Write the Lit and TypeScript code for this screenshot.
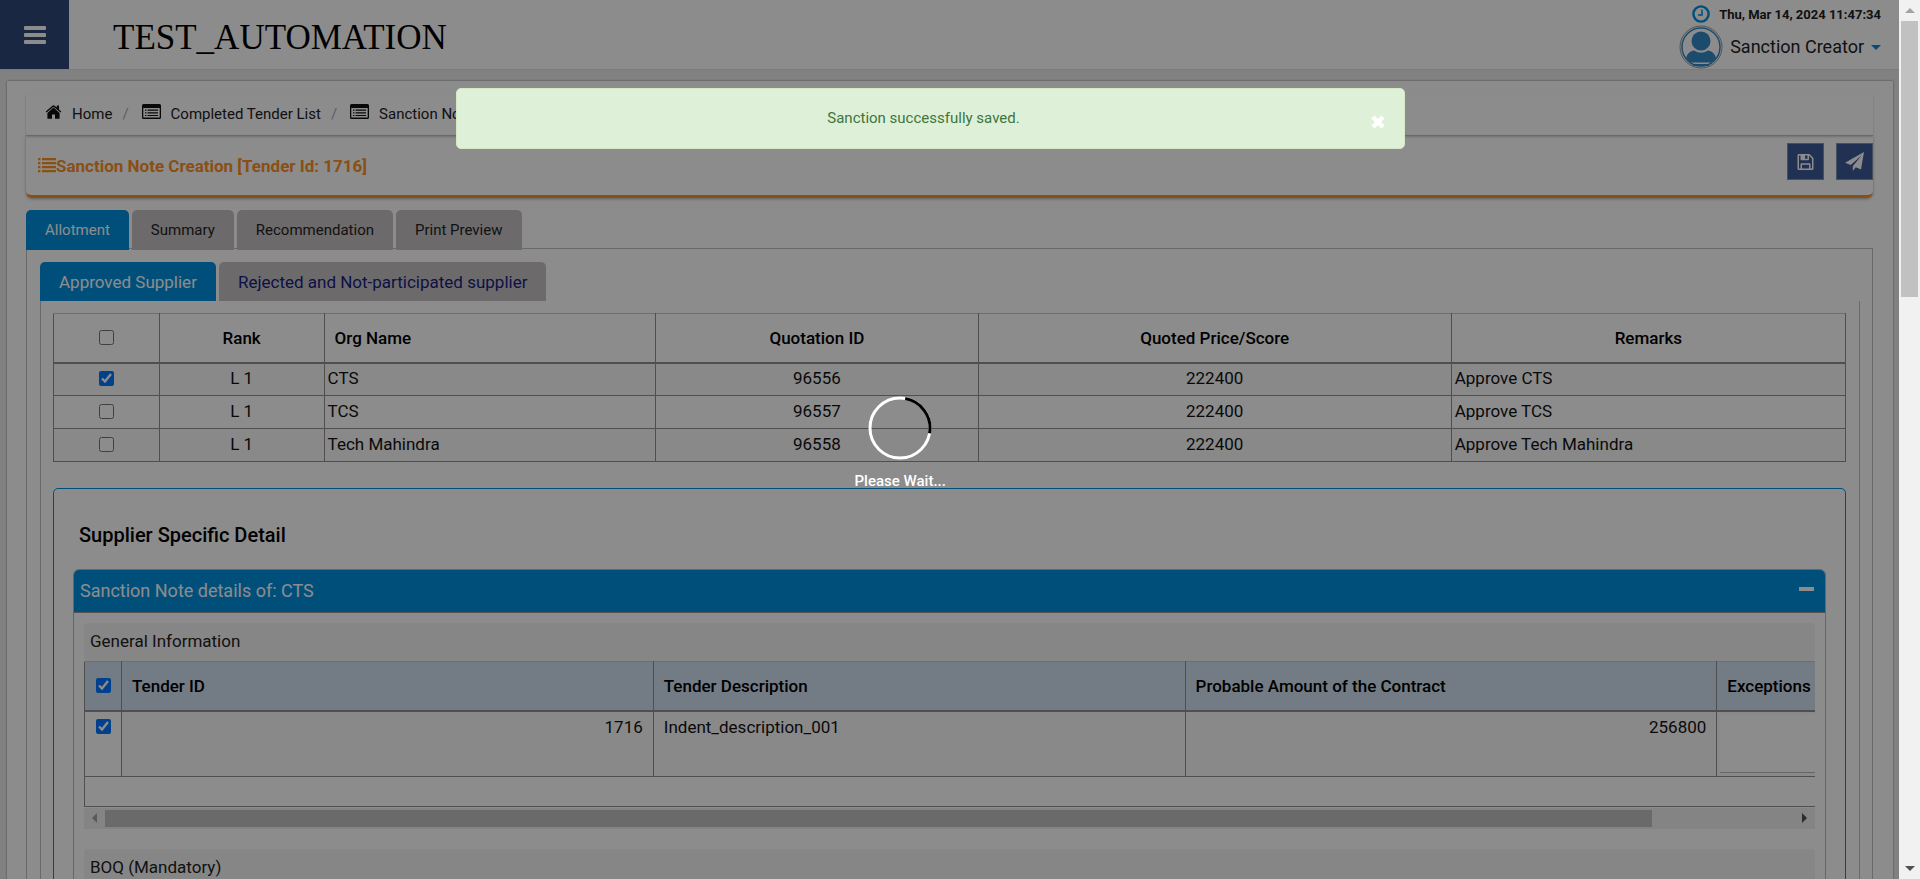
import { LitElement, html, css, svg } from "lit";
import { customElement, state } from "lit/decorators.js";
import { classMap } from "lit/directives/class-map.js";

interface Supplier {
  name: string;
  quotation: string;
  price: string;
  approved: boolean;
}

const icons = {
  home: svg`<path d="M8 3.6 1.9 8.9V14.2a.6.6 0 0 0 .6.6H6.500V10.500H9.500V14.800H13.500a.6.6 0 0 0 .6-.6V8.900z"/><path d="M15.800 7.500 13.500 5.500V1.500H11.300V3.600L8.800 1.500a1.200 1.200 0 0 0-1.600 0L.2 7.500l.8.9L8 2.700l7 5.700z"/>`,
  list: svg`<path fill-rule="evenodd" d="M1.500 1H17.500Q19 1 19 2.500V14.500Q19 16 17.500 16H1.500Q0 16 0 14.500V2.500Q0 1 1.500 1ZM1.300 5V14.400H17.700V5Z"/><path d="M3 6.500h1.400v1.200H3zM5.500 6.500h10.500v1.200H5.500zM3 9.200h1.400v1.200H3zM5.500 9.200h10.500v1.200H5.500zM3 11.900h1.400v1.200H3zM5.500 11.900h10.500v1.200H5.500z"/>`,
  bullets: svg`<path d="M0 1h2.400v2.200H0zM0 5h2.400v2.200H0zM0 9h2.400v2.200H0zM0 13h2.400v2.200H0zM4 1h14v2.200H4zM4 5h14v2.200H4zM4 9h14v2.200H4zM4 13h14v2.200H4z"/>`,
  save: svg`<path fill-rule="evenodd" d="M1.200 1H12l4 4v10.800q0 1.200-1.200 1.200H1.200Q0 17 0 15.800V2.200Q0 1 1.200 1ZM1.500 2.500v13H3v-4.300q0-1 1-1h8q1 0 1 1v4.300h1.500V5.700L11.500 2.600V6.200q0 1-1 1H4q-1 0-1-1V2.500ZM4.500 11.700v3.800h7v-3.800ZM7.500 2.500v3.200h2.500V2.500Z"/>`,
  plane: svg`<path d="M19 0 16 17.500 10.800 15.200 7.800 19V14.200L16.500 3.500 5.700 13.100 0 10.800Z"/>`,
};

@customElement("app-root")
export class AppRoot extends LitElement {
  @state() private tab = "Allotment";
  @state() private supplierTab = "Approved Supplier";

  private suppliers: Supplier[] = [
    { name: "CTS", quotation: "96556", price: "222400", approved: true },
    { name: "TCS", quotation: "96557", price: "222400", approved: false },
    { name: "Tech Mahindra", quotation: "96558", price: "222400", approved: false },
  ];

  static styles = css`
    :host {
      display: grid;
      grid-template-columns: minmax(0, 1fr) 21px;
      height: 100vh;
      overflow: hidden;
      position: relative;
      font-family: Roboto, "Liberation Sans", sans-serif;
      font-size: 17px;
      line-height: 24px;
      color: #222;
    }
    * { box-sizing: border-box; }
    a { color: inherit; text-decoration: none; }
    button { font: inherit; color: inherit; border: 0; padding: 0; background: none; }
    svg { display: block; flex: none; }
    h1, h2, h3, h4, p { margin: 0; font: inherit; }
    input[type="checkbox"] { width: 15px; height: 15px; margin: 0; display: block; }

    .page { position: relative; background: #ececec; overflow: hidden; }

    .header { display: flex; height: 70px; background: #fff; border-bottom: 1px solid #e2e2e2; }
    .menu { width: 69px; display: grid; place-items: center; background: #31477a; color: #fff; }
    .brand {
      flex: 1; align-self: center; padding: 6px 0 0 44px;
      font-family: "Liberation Serif", serif; font-size: 35px; line-height: 44px; color: #000;
    }
    .account { display: flex; flex-direction: column; align-items: flex-end; padding: 3px 18px 0 0; }
    .clock { display: flex; gap: 9px; align-items: center; font-size: 13px; height: 22px; font-weight: 700; }
    .clock span { padding-top: 2px; }
    .user { display: flex; gap: 7px; align-items: center; font-size: 18px; height: 44px; }
    .caret { border: 5px solid transparent; border-top-color: #0091df; border-bottom: 0; }

    .panel {
      margin: 11px 6px 0 7px; padding: 13px 20px 0 19px; height: 100vh;
      background: #fff; box-shadow: 0 0 2px #777;
    }
    .crumbs {
      display: flex; align-items: center; height: 42px; padding: 0 19px 2px;
      border-bottom: 1px solid #c5c5c5; box-shadow: 0 1px 2px #ccc; font-size: 15px;
    }
    .crumb { display: flex; align-items: center; gap: 10px; }
    .crumb svg { color: #111; margin-bottom: 3px; }
    .slash { color: #aaa; padding: 0 13px 0 10px; }
    .title {
      display: flex; justify-content: space-between; height: 62px; padding: 7px 0 0 12px;
      border-bottom: 3px solid #fb9127; border-radius: 0 0 6px 6px; box-shadow: 0 1px 3px #aaa;
    }
    .title-text { display: flex; align-items: center; height: 45px; font-weight: 700; color: #fb9127; }
    .actions { display: flex; gap: 12px; }
    .action {
      display: grid; place-items: center; width: 37px; height: 37px;
      background: #3b5998; border: 1px solid #7d96ad; color: #fff;
    }

    .tabs { display: flex; gap: 3px; position: relative; }
    .tab { background: #c7c2c3; border-radius: 5px 5px 0 0; white-space: nowrap; text-align: center; padding: 0 19px; }
    .tab.on { background: #0091df; color: #fff; }
    .main-tabs { margin-top: 12px; font-size: 15px; margin-bottom: -2px; }
    .main-tabs .tab { height: 40px; }
    .tab-body { border: 1px solid #c0c0c0; padding: 13px 12px 0 13px; height: 100vh; }
    .sub-tabs .tab { height: 39px; color: #16217f; }
    .sub-tabs .tab.on { color: #fff; }
    .sub-body { border: 1px solid #c0c0c0; border-width: 0 1px; padding: 12px 13px 0 12px; height: 100vh; }

    table { border-collapse: collapse; table-layout: fixed; width: 100%; color: #111; }
    th, td { border: 1px solid #919191; padding: 0 3px; }
    th { font-weight: 500; color: #000; text-align: left; }
    .center { text-align: center; }
    .center input { margin: 0 auto; }
    .suppliers th { height: 49px; border-bottom-width: 2px; border-top-color: #c8c8c8; }
    .suppliers td { height: 33px; padding-bottom: 2px; }
    .suppliers tr:nth-child(odd) td { background: #f9f9f9; }
    .suppliers th.org { padding-left: 10px; }
    .w-check { width: 5.9%; }
    .w-rank { width: 9.2%; }
    .w-org { width: 18.5%; }
    .w-quote { width: 18%; }
    .w-price { width: 26.4%; }

    .detail {
      margin-top: 26px; padding: 0 19px; border: 1px solid #0091df; border-radius: 5px; height: 100vh;
    }
    .detail-title { padding: 34px 6px 22px; font-size: 20px; font-weight: 500; color: #000; }
    .card { border: 1px solid #bbb; border-radius: 6px 6px 0 0; height: 100vh; }
    .card-head {
      display: flex; justify-content: space-between; align-items: center; height: 43px;
      padding: 0 11px 0 6px; background: #0091df; color: #fff; font-size: 18px;
      border-radius: 5px 5px 0 0; border-bottom: 1px solid #999;
    }
    .fold { width: 15px; height: 4px; background: #fff; margin-bottom: 4px; }
    .card-body { padding: 10px 10px 0; }
    .strip { height: 38px; padding: 6px; background: #f5f5f5; border-radius: 4px; }
    .grid-wrap { overflow: hidden; }
    .tenders { width: 109%; }
    .tenders th { height: 49px; padding: 0 10px; background: #d1e1f0; border-top-color: #c8c8c8; border-bottom-width: 2px; }
    .tenders td { height: 65px; padding: 3px 10px; vertical-align: top; background: #f9f9f9; }
    .tenders .tick { padding: 0; }
    .tenders td.tick { padding-top: 7px; background: #fff; }
    .tenders .num { text-align: right; }
    .tenders td.note { padding: 3px; }
    .tenders .foot td { height: 30px; background: #fff; }
    .w-tick { width: 37px; }
    .w-third { width: 28.2%; }
    .note-box { display: block; width: 100%; height: 58px; border: 0; border-bottom: 1px solid #bbb; background: #fff; resize: none; }
    .hbar { display: flex; align-items: center; height: 21px; margin: 1px 0 20px; background: #f1f1f1; padding: 0 8px; }
    .hbar-track { flex: 1; margin: 0 16px 0 8px; }
    .hbar-thumb { width: 92%; height: 17px; background: #c1c1c1; }
    .left, .right { border: 5px solid transparent; }
    .left { border-right-color: #a3a3a3; border-left: 0; }
    .right { border-left-color: #505050; border-right: 0; }

    .vbar { display: flex; flex-direction: column; align-items: center; justify-content: space-between; background: #f1f1f1; padding: 8px 0; }
    .up { border: 5px solid transparent; border-bottom-color: #a3a3a3; border-top: 0; }
    .down { border: 5px solid transparent; border-top-color: #505050; border-bottom: 0; }
    .vbar-track { flex: 1; margin: 8px 0; }
    .vbar-thumb { width: 17px; height: 33%; background: #c1c1c1; }

    .veil { position: absolute; inset: 0; background: rgba(0, 0, 0, 0.45); }
    .busy {
      position: absolute; left: 45%; top: 396px; display: flex; flex-direction: column; align-items: center; gap: 10px;
      color: #fff; font-size: 15px; line-height: 22px; font-weight: 500;
    }
    .toast {
      position: absolute; left: 24%; top: 88px; width: 50%; height: 61px; display: flex; justify-content: center;
      padding: 17px 14px 0 0; background: #dff0d8; border: 1px solid #d6e9c6; border-radius: 5px; color: #3c763d; font-size: 15px;
    }
    .close { position: absolute; right: 19px; top: 25px; color: #fff; }
  `;

  private renderTabs(names: string[], active: string, kind: string, pick: (n: string) => void) {
    return html`<div class="tabs ${kind}" role="tablist">
      ${names.map((n) => html`<button role="tab" aria-selected=${n === active} class=${classMap({ tab: true, on: n === active })} @click=${() => pick(n)}>${n}</button>`)}
    </div>`;
  }

  private renderSuppliers() {
    return html`<table class="suppliers">
      <colgroup><col class="w-check" /><col class="w-rank" /><col class="w-org" /><col class="w-quote" /><col class="w-price" /><col /></colgroup>
      <thead>
        <tr>
          <th class="center"><input type="checkbox" aria-label="Select all suppliers" /></th>
          <th class="center">Rank</th>
          <th class="org">Org Name</th>
          <th class="center">Quotation ID</th>
          <th class="center">Quoted Price/Score</th>
          <th class="center">Remarks</th>
        </tr>
      </thead>
      <tbody>
        ${this.suppliers.map((s) => html`<tr>
          <td class="center"><input type="checkbox" aria-label=${s.name} .checked=${s.approved} /></td>
          <td class="center">L 1</td>
          <td>${s.name}</td>
          <td class="center">${s.quotation}</td>
          <td class="center">${s.price}</td>
          <td>Approve ${s.name}</td>
        </tr>`)}
      </tbody>
    </table>`;
  }

  private renderTenders() {
    return html`<div class="grid-wrap"><table class="tenders">
      <colgroup><col class="w-tick" /><col class="w-third" /><col class="w-third" /><col class="w-third" /><col /></colgroup>
      <thead>
        <tr>
          <th class="center tick"><input type="checkbox" aria-label="Select all tenders" checked /></th>
          <th>Tender ID</th>
          <th>Tender Description</th>
          <th>Probable Amount of the Contract</th>
          <th>Exceptions</th>
        </tr>
      </thead>
      <tbody>
        <tr>
          <td class="center tick"><input type="checkbox" aria-label="Tender 1716" checked /></td>
          <td class="num">1716</td>
          <td>Indent_description_001</td>
          <td class="num">256800</td>
          <td class="note"><textarea class="note-box" aria-label="Exceptions"></textarea></td>
        </tr>
        <tr class="foot"><td colspan="5"></td></tr>
      </tbody>
    </table></div>
    <div class="hbar"><i class="left"></i><div class="hbar-track"><div class="hbar-thumb"></div></div><i class="right"></i></div>`;
  }

  render() {
    return html`
      <div class="page">
        <header class="header">
          <button class="menu" aria-label="Menu">
            <svg width="24" height="24" viewBox="0 0 24 24" fill="currentColor"><rect x="1" y="3" width="22" height="4" rx="1"/><rect x="1" y="10" width="22" height="4" rx="1"/><rect x="1" y="17" width="22" height="4" rx="1"/></svg>
          </button>
          <h1 class="brand">TEST_AUTOMATION</h1>
          <div class="account">
            <div class="clock">
              <svg width="18" height="18" viewBox="0 0 18 18" fill="none" stroke="#0091df"><circle cx="9" cy="9" r="7.600" stroke-width="2.400"/><path d="M10 4.500V10H6" stroke-width="1.500"/></svg>
              <span>Thu, Mar 14, 2024 11:47:34</span>
            </div>
            <button class="user">
              <svg width="44" height="44" viewBox="0 0 44 44">
                <circle cx="22" cy="22" r="21" fill="#fff" stroke="#999"/>
                <circle cx="22" cy="22" r="19" fill="none" stroke="#3289c7" stroke-width="1.500"/>
                <circle cx="22" cy="16" r="9.500" fill="#3289c7"/>
                <path d="M7 33Q9 26 15 25.500Q22 30 29 25.500Q35 26 37 33Q35 36 32 37.500H12Q9 36 7 33Z" fill="#3289c7"/>
                <path d="M14 40H30" stroke="#3289c7" stroke-width="2"/>
              </svg>
              <span>Sanction Creator</span><i class="caret"></i>
            </button>
          </div>
        </header>
        <main class="panel">
          <nav class="crumbs" aria-label="Breadcrumb">
            <a class="crumb" href="#"><svg width="17" height="16" viewBox="0 0 16 16" fill="currentColor">${icons.home}</svg>Home</a>
            <span class="slash">/</span>
            <a class="crumb" href="#"><svg width="19" height="18" viewBox="0 0 19 18" fill="currentColor">${icons.list}</svg>Completed Tender List</a>
            <span class="slash">/</span>
            <a class="crumb" href="#"><svg width="19" height="18" viewBox="0 0 19 18" fill="currentColor">${icons.list}</svg>Sanction Note</a>
          </nav>
          <div class="title">
            <h2 class="title-text"><svg width="18" height="17" viewBox="0 0 18 17" fill="currentColor">${icons.bullets}</svg>Sanction Note Creation [Tender Id: 1716]</h2>
            <div class="actions">
              <button class="action" aria-label="Save"><svg width="17" height="18" viewBox="0 0 16 18" fill="currentColor">${icons.save}</svg></button>
              <button class="action" aria-label="Submit"><svg width="19" height="19" viewBox="0 0 19 19" fill="currentColor">${icons.plane}</svg></button>
            </div>
          </div>
          ${this.renderTabs(["Allotment", "Summary", "Recommendation", "Print Preview"], this.tab, "main-tabs", (n) => (this.tab = n))}
          <section class="tab-body">
            ${this.renderTabs(["Approved Supplier", "Rejected and Not-participated supplier"], this.supplierTab, "sub-tabs", (n) => (this.supplierTab = n))}
            <div class="sub-body">
              ${this.renderSuppliers()}
              <section class="detail">
                <h3 class="detail-title">Supplier Specific Detail</h3>
                <div class="card">
                  <div class="card-head"><h4>Sanction Note details of: CTS</h4><button class="fold" aria-label="Collapse"></button></div>
                  <div class="card-body">
                    <p class="strip">General Information</p>
                    ${this.renderTenders()}
                    <p class="strip">BOQ (Mandatory)</p>
                  </div>
                </div>
              </section>
            </div>
          </section>
        </main>
        <div class="veil"></div>
        <div class="busy" role="status">
          <svg width="64" height="64" viewBox="0 0 64 64" fill="none" stroke-width="3">
            <circle cx="32" cy="32" r="30" stroke="#fff"/>
            <path d="M37.200 2.500A30 30 0 0 1 61.500 37.200" stroke="#000"/>
          </svg>
          <span>Please Wait...</span>
        </div>
        <div class="toast" role="alert">
          Sanction successfully saved.
          <button class="close" aria-label="Close"><svg width="14" height="16" viewBox="0 0 14 16" fill="none" stroke="currentColor" stroke-width="4.500"><path d="M2 3 12 13M12 3 2 13"/></svg></button>
        </div>
      </div>
      <div class="vbar"><i class="up"></i><div class="vbar-track"><div class="vbar-thumb"></div></div><i class="down"></i></div>
    `;
  }
}
